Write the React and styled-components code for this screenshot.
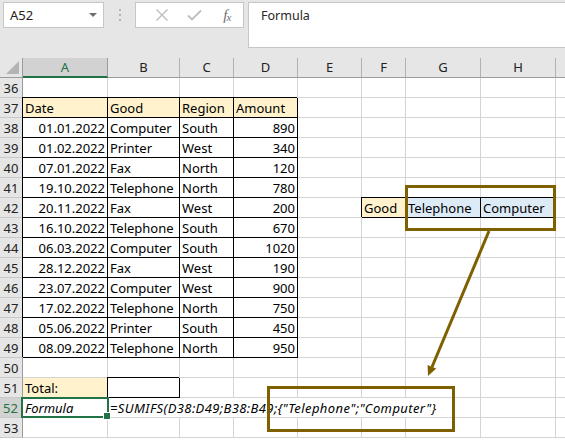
import React from "react";
import styled, { createGlobalStyle, css } from "styled-components";

const GlobalStyle = createGlobalStyle`
  html, body {
    margin: 0;
    padding: 0;
    background: #ffffff;
    overflow: hidden;
  }
  * {
    box-sizing: border-box;
  }
`;

const GRID = "#d4d4d4";
const HEADER_BG = "#e6e6e6";
const EXCEL_GREEN = "#217346";
const NOTE = "#7f6000";

// the last column (I) is cut off by the window, its letter is not visible
const COLUMNS = ["A", "B", "C", "D", "E", "F", "G", "H", ""];
const WIDTHS = [23, 85, 72, 54, 64, 64, 44, 75, 75, 20];

const rows = [
  ["01.01.2022", "Computer", "South", "890"],
  ["01.02.2022", "Printer", "West", "340"],
  ["07.01.2022", "Fax", "North", "120"],
  ["19.10.2022", "Telephone", "North", "780"],
  ["20.11.2022", "Fax", "West", "200"],
  ["16.10.2022", "Telephone", "South", "670"],
  ["06.03.2022", "Computer", "South", "1020"],
  ["28.12.2022", "Fax", "West", "190"],
  ["23.07.2022", "Computer", "West", "900"],
  ["17.02.2022", "Telephone", "North", "750"],
  ["05.06.2022", "Printer", "South", "450"],
  ["08.09.2022", "Telephone", "North", "950"],
];

const Window = styled.div`
  position: relative;
  width: 565px;
  height: 445px;
  overflow: hidden;
  font-family: "Noto Sans", "Open Sans", "Liberation Sans", sans-serif;
`;

/* formula bar */

const FormulaBar = styled.div`
  height: 58px;
  background: ${HEADER_BG};
  display: flex;
  align-items: flex-start;
  padding: 2px 0 0 3px;
  color: #222;
`;

const NameBox = styled.div`
  width: 101px;
  height: 26px;
  background: #fff;
  border: 1px solid #c6c6c6;
  display: flex;
  align-items: center;
  justify-content: space-between;
  padding: 0 6px 0 6px;
  font-size: 13px;
`;

const Caret = styled.span`
  width: 0;
  height: 0;
  border-left: 4px solid transparent;
  border-right: 4px solid transparent;
  border-top: 4px solid #6d6d6d;
`;

const Grip = styled.div`
  width: 31px;
  height: 26px;
  display: flex;
  flex-direction: column;
  align-items: center;
  justify-content: center;
  gap: 3px;
  span {
    width: 2px;
    height: 2px;
    background: #b5b5b5;
  }
`;

const Buttons = styled.div`
  width: 109px;
  height: 26px;
  background: #fff;
  border: 1px solid #c6c6c6;
  display: flex;
  align-items: center;
  padding-left: 10px;
`;

const IconSlot = styled.span`
  width: 37px;
  height: 24px;
  display: flex;
  align-items: center;
  justify-content: center;
`;

const Fx = styled.span`
  font-family: "Liberation Serif", "DejaVu Serif", serif;
  font-style: italic;
  font-size: 15px;
  color: #6f6f6f;
  letter-spacing: -1px;
  sub {
    font-size: 11px;
    vertical-align: -1px;
  }
`;

const FormulaInput = styled.div`
  flex: 1;
  height: 46px;
  margin-left: 4px;
  background: #fff;
  border: 1px solid #c6c6c6;
  border-right: none;
  padding: 3px 0 0 12px;
  font-size: 12.5px;
  line-height: 20px;
  color: #262626;
`;

/* sheet */

const Sheet = styled.div`
  display: grid;
  grid-template-columns: ${WIDTHS.map((w) => `${w}px`).join(" ")};
  grid-auto-rows: 20px;
  font-size: 13px;
  color: #000;
`;

const Corner = styled.div`
  position: relative;
  background: ${HEADER_BG};
  border-right: 1px solid #9b9b9b;
  border-bottom: 1px solid #9b9b9b;
  &::after {
    content: "";
    position: absolute;
    right: 3px;
    bottom: 3px;
    width: 0;
    height: 0;
    border-left: 13px solid transparent;
    border-bottom: 13px solid #b4b4b4;
  }
`;

const ColHead = styled.div`
  background: ${(p) => (p.$active ? "#d2d2d2" : HEADER_BG)};
  color: ${(p) => (p.$active ? EXCEL_GREEN : "#222")};
  border-right: 1px solid ${(p) => (p.$active ? "#9b9b9b" : "#b1b1b1")};
  border-bottom: ${(p) =>
    p.$active ? `2px solid ${EXCEL_GREEN}` : "1px solid #9b9b9b"};
  text-align: center;
  line-height: 19px;
`;

const RowHead = styled.div`
  background: ${(p) => (p.$active ? "#d2d2d2" : HEADER_BG)};
  color: ${(p) => (p.$active ? EXCEL_GREEN : "#222")};
  border-right: ${(p) =>
    p.$active ? `2px solid ${EXCEL_GREEN}` : "1px solid #9b9b9b"};
  border-bottom: 1px solid #c8c8c8;
  text-align: center;
  line-height: 20px;
`;

const Cell = styled.div`
  position: relative;
  background: ${(p) => p.$fill || "#fff"};
  border-right: 1px solid ${GRID};
  border-bottom: 1px solid ${GRID};
  padding: 0 2px 0 2px;
  line-height: 20px;
  white-space: nowrap;
  text-align: ${(p) => p.$align || "left"};
  font-style: ${(p) => (p.$italic ? "italic" : "normal")};
  letter-spacing: ${(p) => p.$spacing || "normal"};
  overflow: hidden;
  ${(p) => p.$span && css`grid-column: span ${p.$span};`}
  ${(p) =>
    p.$fill &&
    css`
      border-right-color: ${p.$fill};
      border-bottom-color: ${p.$fill};
    `}
  ${(p) =>
    p.$boxed &&
    css`
      border-right-color: #000;
      border-bottom-color: #000;
      box-shadow: -1px -1px 0 0 #000;
    `}
  ${(p) =>
    p.$selected &&
    css`
      overflow: visible;
      z-index: 2;
      &::after {
        content: "";
        position: absolute;
        left: -2px;
        top: -1px;
        right: -2px;
        bottom: -1px;
        border: 2px solid ${EXCEL_GREEN};
        pointer-events: none;
      }
      &::before {
        content: "";
        position: absolute;
        right: -4px;
        bottom: -3px;
        width: 6px;
        height: 6px;
        background: ${EXCEL_GREEN};
        border: 1px solid #fff;
        z-index: 3;
      }
    `}
`;

const Overlay = styled.svg`
  position: absolute;
  left: 0;
  top: 0;
  pointer-events: none;
  z-index: 5;
`;

const emptyCells = (from, count) =>
  Array.from({ length: count }, (_, i) => <Cell key={`e${from + i}`} />);

function App() {
  const sheetRows = [];

  sheetRows.push(
    <Corner key="corner" />,
    ...COLUMNS.map((c, i) => (
      <ColHead key={`h${i}`} $active={i === 0}>
        {c}
      </ColHead>
    ))
  );

  for (let r = 36; r <= 53; r++) {
    const cells = [];
    const head = (
      <RowHead key={`r${r}`} $active={r === 52}>
        {r}
      </RowHead>
    );

    if (r === 37) {
      ["Date", "Good", "Region", "Amount"].forEach((t) =>
        cells.push(
          <Cell key={t} $fill="#fff2cc" $boxed>
            {t}
          </Cell>
        )
      );
      cells.push(...emptyCells(4, 5));
    } else if (r >= 38 && r <= 49) {
      const [date, good, region, amount] = rows[r - 38];
      cells.push(
        <Cell key="a" $boxed $align="right">
          {date}
        </Cell>,
        <Cell key="b" $boxed>
          {good}
        </Cell>,
        <Cell key="c" $boxed>
          {region}
        </Cell>,
        <Cell key="d" $boxed $align="right">
          {amount}
        </Cell>,
        <Cell key="e" />
      );
      if (r === 42) {
        cells.push(
          <Cell key="f" $fill="#fff2cc" $boxed>
            Good
          </Cell>,
          <Cell key="g" $fill="#ddebf7" $boxed>
            Telephone
          </Cell>,
          <Cell key="h" $fill="#ddebf7" $boxed>
            Computer
          </Cell>,
          <Cell key="i" />
        );
      } else {
        cells.push(...emptyCells(5, 4));
      }
    } else if (r === 51) {
      cells.push(
        <Cell key="a" $fill="#fff2cc">
          Total:
        </Cell>,
        <Cell key="b" $boxed />,
        ...emptyCells(2, 7)
      );
    } else if (r === 52) {
      cells.push(
        <Cell key="a" $italic $selected>
          Formula
        </Cell>,
        <Cell key="b" $italic $span={6} $spacing="0.4px">
          =SUMIFS(D38:D49;B38:B49;{"{"}"Telephone";"Computer"{"}"}
        </Cell>,
        ...emptyCells(7, 2)
      );
    } else {
      cells.push(...emptyCells(0, 9));
    }

    sheetRows.push(head, ...cells);
  }

  return (
    <>
      <GlobalStyle />
      <Window>
        <FormulaBar>
          <NameBox>
            <span>A52</span>
            <Caret />
          </NameBox>
          <Grip>
            <span />
            <span />
            <span />
          </Grip>
          <Buttons>
            <IconSlot>
              <svg width="14" height="14" viewBox="0 0 14 14">
                <path
                  d="M1.5 1.5 L12.5 12.5 M12.5 1.5 L1.5 12.5"
                  stroke="#bdbdbd"
                  strokeWidth="1.4"
                  fill="none"
                />
              </svg>
            </IconSlot>
            <IconSlot>
              <svg width="15" height="12" viewBox="0 0 15 12">
                <path
                  d="M1 6.5 L5 10.5 L14 1.5"
                  stroke="#bdbdbd"
                  strokeWidth="1.8"
                  fill="none"
                />
              </svg>
            </IconSlot>
            <IconSlot>
              <Fx>
                f<sub>x</sub>
              </Fx>
            </IconSlot>
          </Buttons>
          <FormulaInput>Formula</FormulaInput>
        </FormulaBar>

        <Sheet>{sheetRows}</Sheet>

        <Overlay width="565" height="445" viewBox="0 0 565 445">
          <rect
            x="406.5"
            y="186.5"
            width="148"
            height="43"
            fill="none"
            stroke={NOTE}
            strokeWidth="3"
          />
          <rect
            x="268.5"
            y="387.5"
            width="185"
            height="43"
            fill="none"
            stroke={NOTE}
            strokeWidth="3"
          />
          <line
            x1="489"
            y1="231"
            x2="432"
            y2="367"
            stroke={NOTE}
            strokeWidth="3"
          />
          <polygon points="428,376 436.2,368.6 427.6,365" fill={NOTE} />
        </Overlay>
      </Window>
    </>
  );
}

export default App;
